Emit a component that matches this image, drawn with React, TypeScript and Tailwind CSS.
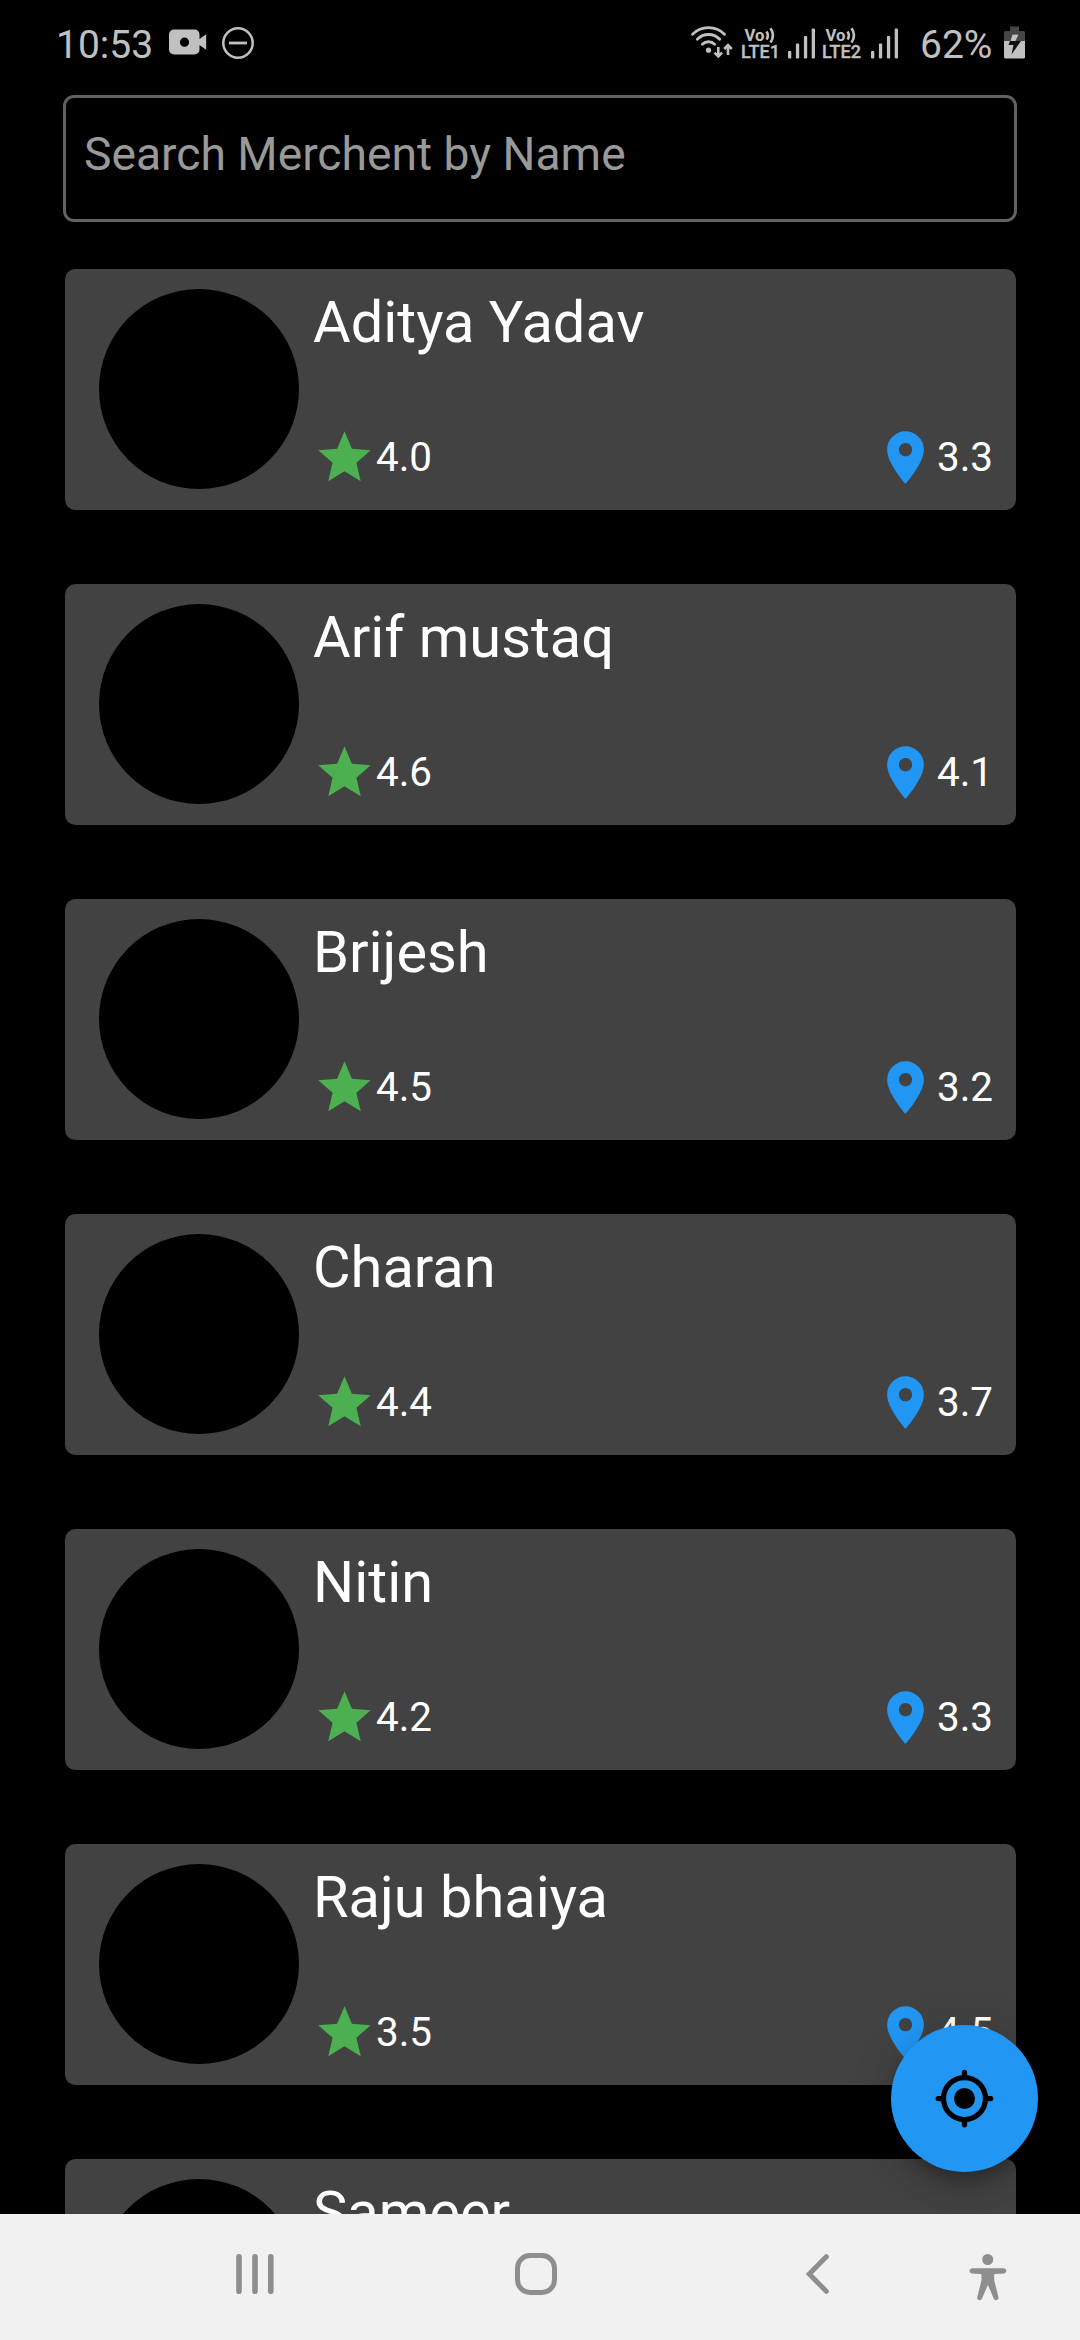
import React from "react";

type Merchant = { name: string; rating: string; distance: string };

const merchants: Merchant[] = [
  { name: "Aditya Yadav", rating: "4.0", distance: "3.3" },
  { name: "Arif mustaq", rating: "4.6", distance: "4.1" },
  { name: "Brijesh", rating: "4.5", distance: "3.2" },
  { name: "Charan", rating: "4.4", distance: "3.7" },
  { name: "Nitin", rating: "4.2", distance: "3.3" },
  { name: "Raju bhaiya", rating: "3.5", distance: "4.5" },
  { name: "Sameer", rating: "", distance: "" },
];

function VideoIcon() {
  return (
    <svg className="ml-[17px] h-[26px] w-[38px] shrink-0" viewBox="0 0 38 26" fill="#c0c0c0">
      <path
        fillRule="evenodd"
        d="M5 0.5h20.5a5 5 0 0 1 5 5V10l6.7-4.8v15.6L30.500 16v4.500a5 5 0 0 1-5 5H5a5 5 0 0 1-5-5v-15a5 5 0 0 1 5-5zM15.500 8.600a4.600 4.600 0 1 0 0 9.200a4.600 4.600 0 1 0 0-9.200z"
      />
    </svg>
  );
}

function DoNotDisturbIcon() {
  return (
    <svg className="ml-[15px] mt-px h-8 w-8 shrink-0" viewBox="0 0 32 32" fill="none" stroke="#c0c0c0">
      <circle cx="16" cy="16" r="14.7" strokeWidth="2.500" />
      <path d="M7 16h18" strokeWidth="2.800" />
    </svg>
  );
}

function WifiIcon() {
  return (
    <svg className="h-[34px] w-[44px] shrink-0" viewBox="690 25 44 34" fill="none" stroke="#c0c0c0" strokeWidth="2.800" strokeLinecap="round">
      <path d="M692.500 34.300a22.500 22.500 0 0 1 32 0" />
      <path d="M697.300 39.300a15.500 15.500 0 0 1 22.400 0" />
      <path d="M702.400 44.300a8.600 8.600 0 0 1 12.200 0" />
      <circle cx="708.500" cy="50.200" r="2.600" fill="#c0c0c0" stroke="none" />
      <path strokeLinecap="butt" strokeWidth="2.600" d="M718.300 47v9M714.500 52.600l3.800 3.800l3.800-3.800M728 55V45.500M724.200 49l3.800-3.800l3.800 3.800" />
    </svg>
  );
}

function VoLte({ sim }: { sim: string }) {
  return (
    <svg className="h-[34px] w-[42px] shrink-0 overflow-visible" viewBox="0 0 42 34" fill="#c0c0c0" fontFamily="Roboto" fontWeight="700">
      <text x="3.500" y="15.500" fontSize="17" textLength="20" lengthAdjust="spacingAndGlyphs">Vo</text>
      <path d="M25.500 6.500q2.800 4 0 8M29.500 3.300q5 7.100 0 14.200" fill="none" stroke="#c0c0c0" strokeWidth="2.600" />
      <text x="0" y="33.300" fontSize="18" fontWeight="500" stroke="#c0c0c0" strokeWidth="0.300">LTE{sim}</text>
    </svg>
  );
}

function SignalBars() {
  return (
    <svg className="mt-[3px] h-[31px] w-[27px] shrink-0" viewBox="0 0 27 31" fill="#c0c0c0">
      <rect x="0" y="23" width="3.300" height="7.500" rx="1" />
      <rect x="7.900" y="15.500" width="3.300" height="15" rx="1" />
      <rect x="15.900" y="8" width="3.300" height="22.500" rx="1" />
      <rect x="23.700" y="0.500" width="3.300" height="30" rx="1" />
    </svg>
  );
}

function BatteryIcon() {
  return (
    <svg className="ml-[10px] mt-px h-[33px] w-[21px] shrink-0" viewBox="0 0 21 33">
      <path d="M6 0.500h9V5h4.500a1.500 1.500 0 0 1 1.500 1.500V15H0V6.500A1.500 1.500 0 0 1 1.500 5H6z" fill="#454545" />
      <path d="M0 15h21v16a1.500 1.500 0 0 1-1.500 1.500h-18A1.500 1.500 0 0 1 0 31z" fill="#c0c0c0" />
      <path d="M8.500 8.500h6L11.500 15h5.500L7.500 28.500L9.500 19H4.500z" fill="#111" />
      <path d="M8.500 8.500h6L11.500 15H6.300z" fill="#c0c0c0" />
    </svg>
  );
}

function StatusBar() {
  return (
    <header className="flex h-[95px] shrink-0 items-start justify-between pl-[56px] pr-[55px] text-[#c0c0c0]">
      <div className="flex h-[84px] items-center">
        <span className="mt-[6px] w-[96px] text-[39px] leading-[46px]">10:53</span>
        <VideoIcon />
        <DoNotDisturbIcon />
      </div>
      <div className="flex h-[84px] items-center">
        <WifiIcon />
        <div className="ml-[7px] flex items-center gap-[5px]">
          <VoLte sim="1" />
          <SignalBars />
        </div>
        <div className="ml-[7px] flex items-center gap-[7px]">
          <VoLte sim="2" />
          <SignalBars />
        </div>
        <span className="ml-[22px] mt-[6px] w-[74px] text-[39px] leading-[46px]">62%</span>
        <BatteryIcon />
      </div>
    </header>
  );
}

function MerchantCard({ name, rating, distance }: Merchant) {
  return (
    <article className="flex h-[241px] shrink-0 rounded-[10.500px] bg-[#424242] pl-[34px] pr-[23px] pt-[20px]">
      <div className="size-[200px] shrink-0 rounded-full bg-black" />
      <div className="ml-[14px] flex flex-1 flex-col text-white">
        <h2 className="-mt-px text-[57.750px] font-normal leading-[68px]">{name}</h2>
        <div className="mt-[70px] flex h-[63px] items-center text-[40.400px] leading-[47px]">
          <svg className="size-[63px]" viewBox="0 0 24 24" fill="#4caf50">
            <path d="M12 17.270L18.180 21l-1.640-7.030L22 9.240l-7.190-.61L12 2 9.190 8.630 2 9.240l5.460 4.730L5.820 21z" />
          </svg>
          <span>{rating}</span>
          <svg className="ml-auto size-[63px]" viewBox="0 0 24 24" fill="#2196f3">
            <path d="M12 2C8.130 2 5 5.130 5 9c0 5.250 7 13 7 13s7-7.750 7-13c0-3.870-3.130-7-7-7zm0 9.500c-1.380 0-2.500-1.120-2.500-2.500s1.120-2.500 2.500-2.500 2.500 1.120 2.500 2.500-1.120 2.500-2.500 2.500z" />
          </svg>
          <span>{distance}</span>
        </div>
      </div>
    </article>
  );
}

function LocateButton() {
  return (
    <button
      aria-label="Locate me"
      className="absolute bottom-[42px] right-[42px] flex size-[147px] items-center justify-center rounded-full bg-[#2196f3] shadow-[0_8px_13px_-3px_rgba(0,0,0,0.2),0_16px_26px_0_rgba(0,0,0,0.14),0_3px_47px_0_rgba(0,0,0,0.12)]"
    >
      <svg className="size-[63px]" viewBox="0 0 24 24" fill="none" stroke="#000" strokeWidth="2" strokeLinecap="round">
        <circle cx="12" cy="12" r="8" />
        <circle cx="12" cy="12" r="4" fill="#000" stroke="none" />
        <path d="M12 2v2M12 20v2M2 12h2M20 12h2" />
      </svg>
    </button>
  );
}

function NavigationBar() {
  return (
    <nav className="flex h-[126px] shrink-0 items-start bg-[#f1f1f1] pl-[236px] pt-[39px]">
      <svg className="h-[42px] w-[38px]" viewBox="0 0 38 42" fill="#8e8e8e">
        <rect x="0.200" y="1" width="5.600" height="40" rx="2.800" />
        <rect x="16.200" y="1" width="5.600" height="40" rx="2.800" />
        <rect x="32" y="1" width="5.600" height="40" rx="2.800" />
      </svg>
      <svg className="ml-[241px] size-[42px]" viewBox="0 0 42 42" fill="none" stroke="#8e8e8e" strokeWidth="5">
        <rect x="2.500" y="2.500" width="37" height="37" rx="12.500" />
      </svg>
      <svg className="ml-[249px] h-[42px] w-[24px]" viewBox="0 0 24 42" fill="none" stroke="#8e8e8e" strokeWidth="5" strokeLinecap="round">
        <path d="M20.300 3.700L3.300 21l17 17.300" />
      </svg>
      <svg className="ml-[139px] mt-px h-[48px] w-[38px]" viewBox="0 0 38 48" fill="#8e8e8e">
        <circle cx="18.700" cy="5.500" r="5.500" />
        <path d="M2.700 14.200h32.500a2.700 2.700 0 0 1 0 5.300l-9 .6a1 1 0 0 0-1 1.200v5l4.300 17a2.500 2.500 0 0 1-4.700 1.500L18.900 31l-6 13.800a2.500 2.500 0 0 1-4.700-1.500l4.300-17v-5a1 1 0 0 0-1-1.200l-8.800-.6a2.700 2.700 0 0 1 0-5.300z" />
      </svg>
    </nav>
  );
}

export default function App() {
  return (
    <div className="flex h-[2340px] w-[1080px] flex-col overflow-hidden bg-black font-[Roboto,sans-serif]">
      <div className="relative flex h-[2214px] shrink-0 flex-col overflow-hidden">
        <StatusBar />
        <input
          placeholder="Search Merchent by Name"
          className="mx-[63px] h-[127px] shrink-0 rounded-[11px] border-3 border-[#626262] bg-black pb-[10px] pl-[18px] text-[46.200px] text-white outline-none placeholder:text-[#999999] placeholder:opacity-100"
        />
        <main className="mt-[47px] flex flex-col gap-[74px] pl-[65px] pr-[64px]">
          {merchants.map((merchant) => (
            <MerchantCard key={merchant.name} {...merchant} />
          ))}
        </main>
        <LocateButton />
      </div>
      <NavigationBar />
    </div>
  );
}
